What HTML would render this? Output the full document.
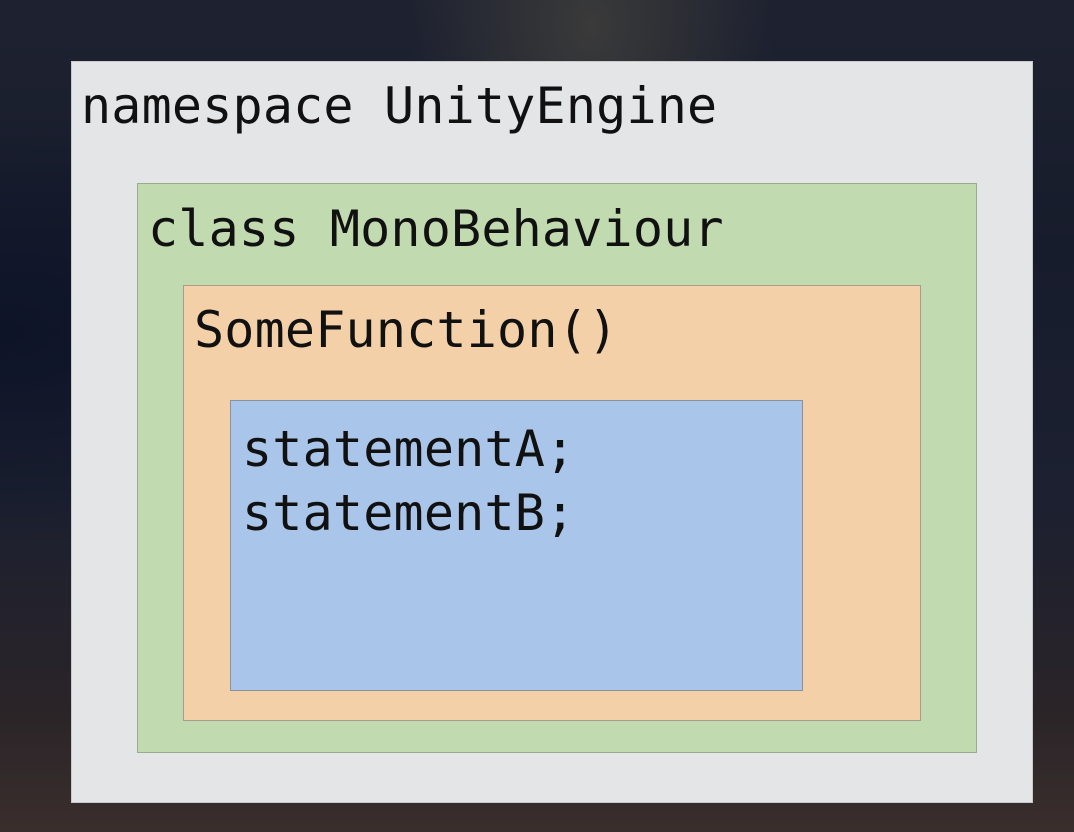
<!DOCTYPE html>
<html><head><style>
html,body{margin:0;padding:0;width:1074px;height:832px;overflow:hidden}
body{background:linear-gradient(180deg,#1e2230 0%,#171c2c 30%,#1c2030 60%,#2a2428 85%,#3a2e2c 100%);position:relative;font-family:"DejaVu Sans Mono","Liberation Mono",monospace;color:#111}
.b{position:absolute;box-sizing:border-box}
.t{position:absolute;font-size:50px;line-height:1;white-space:pre;letter-spacing:0.2px}
</style></head><body>
<div class="b" style="left:0;top:0;width:1074px;height:832px;background:radial-gradient(ellipse at 55% 3%,#3a3a3a 0%,rgba(40,40,45,0) 22%),radial-gradient(ellipse at 0% 40%,#0e1428 0%,rgba(0,0,0,0) 30%)"></div>
<div class="b" style="left:71px;top:61px;width:962px;height:742px;background:#e4e5e7;border:1px solid #c9c9cc"></div>
<div class="b" style="left:137px;top:183px;width:840px;height:570px;background:#c1dab0;border:1px solid #9aaa90"></div>
<div class="b" style="left:183px;top:285px;width:738px;height:436px;background:#f4d0a8;border:1px solid #a89c8c"></div>
<div class="b" style="left:230px;top:400px;width:573px;height:291px;background:#a9c5ea;border:1px solid #8892a0"></div>
<div class="t" style="left:81px;top:81px">namespace UnityEngine</div>
<div class="t" style="left:148px;top:204px">class MonoBehaviour</div>
<div class="t" style="left:194px;top:305px">SomeFunction()</div>
<div class="t" style="left:242px;top:424px">statementA;</div>
<div class="t" style="left:242px;top:488px">statementB;</div>
</body></html>
